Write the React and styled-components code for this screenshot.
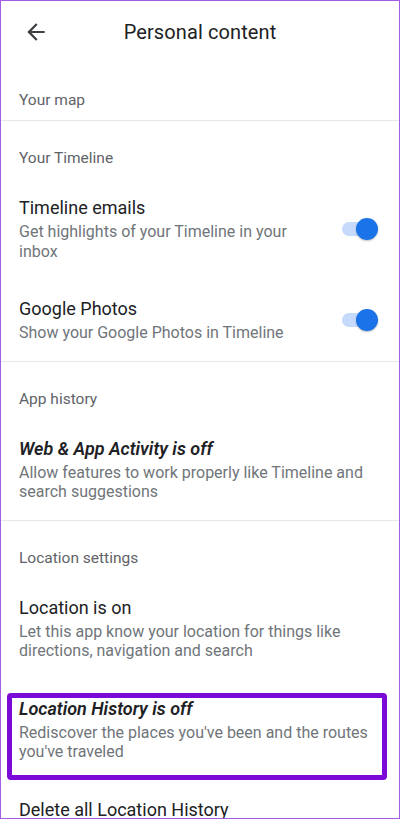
import React from "react";
import styled, { createGlobalStyle, css } from "styled-components";

const GlobalStyle = createGlobalStyle`
  html, body {
    margin: 0;
    padding: 0;
    background: #ffffff;
  }
  * {
    box-sizing: border-box;
  }
`;

const sections = [
  { label: "Your map", items: [] },
  {
    label: "Your Timeline",
    items: [
      {
        title: "Timeline emails",
        sub: "Get highlights of your Timeline in your inbox",
        toggle: true,
      },
      {
        title: "Google Photos",
        sub: "Show your Google Photos in Timeline",
        toggle: true,
      },
    ],
  },
  {
    label: "App history",
    items: [
      {
        title: "Web & App Activity is off",
        sub: "Allow features to work properly like Timeline and search suggestions",
        emphasis: true,
      },
    ],
  },
  {
    label: "Location settings",
    items: [
      {
        title: "Location is on",
        sub: "Let this app know your location for things like directions, navigation and search",
      },
      {
        title: "Location History is off",
        sub: "Rediscover the places you've been and the routes you've traveled",
        emphasis: true,
        highlighted: true,
      },
      { title: "Delete all Location History" },
    ],
  },
];

const BackArrow = () => (
  <svg width="26" height="26" viewBox="0 0 24 24" fill="#3c4043">
    <path d="M20 11H7.83l5.59-5.59L12 4l-8 8 8 8 1.41-1.41L7.83 13H20v-2z" />
  </svg>
);

const App = () => {
  return (
    <>
      <GlobalStyle />
      <Screen>
        <Header>
          <BackButton aria-label="Back">
            <BackArrow />
          </BackButton>
          <Title>Personal content</Title>
          <span />
        </Header>
        {sections.map((section, i) => (
          <Section key={section.label} $last={i === sections.length - 1}>
            <SectionLabel>{section.label}</SectionLabel>
            {section.items.map((item) => (
              <Item key={item.title} $highlighted={item.highlighted}>
                <ItemText>
                  <ItemTitle $emphasis={item.emphasis}>{item.title}</ItemTitle>
                  {item.sub && <ItemSub>{item.sub}</ItemSub>}
                </ItemText>
                {item.toggle && (
                  <Toggle>
                    <Track />
                    <Thumb />
                  </Toggle>
                )}
              </Item>
            ))}
          </Section>
        ))}
      </Screen>
    </>
  );
};

export default App;

const Screen = styled.div`
  width: 400px;
  height: 819px;
  overflow: hidden;
  border: 1px solid #a45ce4;
  background: #ffffff;
  font-family: Roboto, "Noto Sans", Arial, sans-serif;
  color: #202124;
`;

const Header = styled.header`
  height: 62px;
  display: grid;
  grid-template-columns: 1fr auto 1fr;
  align-items: center;
  padding: 0 22px;
`;

const BackButton = styled.button`
  justify-self: start;
  display: flex;
  align-items: center;
  padding: 0;
  border: none;
  background: transparent;
`;

const Title = styled.h1`
  margin: 0;
  font-size: 20px;
  font-weight: 400;
  color: #202124;
  letter-spacing: 0.1px;
`;

const Section = styled.section`
  border-bottom: ${({ $last }) => ($last ? "none" : "1px solid #e6e7ea")};
`;

const SectionLabel = styled.div`
  padding: 27px 18px 10px;
  font-size: 15.5px;
  line-height: 20px;
  color: #5f6368;
`;

const Item = styled.div`
  position: relative;
  display: flex;
  align-items: center;
  gap: 16px;
  padding: 18px 21px 18px 18px;

  ${({ $highlighted }) =>
    $highlighted &&
    css`
      &::after {
        content: "";
        position: absolute;
        top: 14px;
        left: 6px;
        right: 12px;
        bottom: 0;
        border: 5px solid #7a0ad8;
        border-radius: 4px;
        pointer-events: none;
      }
    `}
`;

const ItemText = styled.div`
  flex: 1;
  display: flex;
  flex-direction: column;
`;

const ItemTitle = styled.div`
  font-size: 18px;
  line-height: 24px;
  color: #202124;
  ${({ $emphasis }) =>
    $emphasis &&
    css`
      font-style: italic;
      font-weight: 600;
    `}
`;

const ItemSub = styled.div`
  margin-top: 2px;
  font-size: 16px;
  line-height: 19.5px;
  color: #70757a;
`;

const Toggle = styled.div`
  position: relative;
  width: 36px;
  height: 22px;
  flex-shrink: 0;
`;

const Track = styled.div`
  position: absolute;
  left: 0;
  top: 4px;
  width: 30px;
  height: 14px;
  border-radius: 7px;
  background: #c6dafb;
`;

const Thumb = styled.div`
  position: absolute;
  right: 0;
  top: 0;
  width: 22px;
  height: 22px;
  border-radius: 50%;
  background: #1a73e8;
  box-shadow: 0 1px 2px rgba(0, 0, 0, 0.25);
`;
